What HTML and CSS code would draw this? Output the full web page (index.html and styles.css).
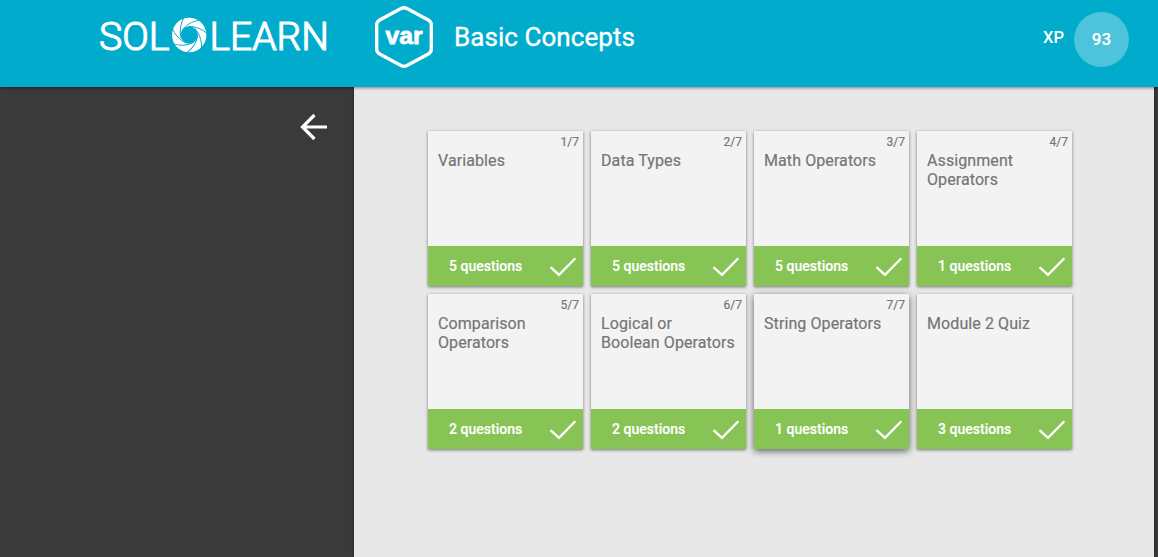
FILE: index.html
```html
<!DOCTYPE html>
<html lang="en">
<head>
<meta charset="utf-8">
<title>Basic Concepts</title>
<link rel="stylesheet" href="styles.css">
</head>
<body>
<svg class="defs" aria-hidden="true">
  <symbol id="check" viewBox="0 0 28 22"><path d="M1.500 12.200l8.500 7.600L26.300 3.300" fill="none" stroke="#fff" stroke-width="2.300"/></symbol>
</svg>
<header class="topbar">
  <svg class="logo" viewBox="0 0 232 48" role="img">
    <text x="1" y="36.500" textLength="70.500" lengthAdjust="spacingAndGlyphs">SOL</text>
    <text x="111.500" y="36.500" textLength="119.500" lengthAdjust="spacingAndGlyphs">LEARN</text>
    <g transform="translate(91.200 22)">
      <circle class="ring" r="12.700"/>
      <g class="cuts">
        <path id="cut" d="M-8.200 3C-9.500-5-2-12.500 10-15"/>
        <use href="#cut" transform="rotate(51.430)"/><use href="#cut" transform="rotate(102.860)"/>
        <use href="#cut" transform="rotate(154.290)"/><use href="#cut" transform="rotate(205.710)"/>
        <use href="#cut" transform="rotate(257.140)"/><use href="#cut" transform="rotate(308.570)"/>
      </g>
    </g>
  </svg>
  <svg class="module-icon" viewBox="0 0 60 64">
    <path d="M27 3.500Q30 1.900 33 3.500L54.300 15Q57.300 16.700 57.300 19.800V44.200Q57.300 47.300 54.300 49L33 60.500Q30 62.100 27 60.500L5.700 49Q2.700 47.300 2.700 44.200V19.800Q2.700 16.700 5.700 15Z"/>
    <text x="11.500" y="38.700" textLength="37" lengthAdjust="spacingAndGlyphs">var</text>
  </svg>
  <h1 class="title">Basic Concepts</h1>
  <span class="xp-label">XP</span>
  <span class="xp">93</span>
</header>
<div class="body">
  <aside class="side">
    <svg class="back" viewBox="0 0 28 28"><path d="M27 14H3M14.500 2L2.500 14L14.500 26"/></svg>
  </aside>
  <main class="content">
    <div class="grid">
      <article class="card"><span class="num">1/7</span><h2>Variables</h2><footer><span>5 questions</span><svg><use href="#check"/></svg></footer></article>
      <article class="card"><span class="num">2/7</span><h2>Data Types</h2><footer><span>5 questions</span><svg><use href="#check"/></svg></footer></article>
      <article class="card"><span class="num">3/7</span><h2>Math Operators</h2><footer><span>5 questions</span><svg><use href="#check"/></svg></footer></article>
      <article class="card"><span class="num">4/7</span><h2>Assignment Operators</h2><footer><span>1 questions</span><svg><use href="#check"/></svg></footer></article>
      <article class="card"><span class="num">5/7</span><h2>Comparison Operators</h2><footer><span>2 questions</span><svg><use href="#check"/></svg></footer></article>
      <article class="card"><span class="num">6/7</span><h2>Logical or<br>Boolean Operators</h2><footer><span>2 questions</span><svg><use href="#check"/></svg></footer></article>
      <article class="card raised"><span class="num">7/7</span><h2>String Operators</h2><footer><span>1 questions</span><svg><use href="#check"/></svg></footer></article>
      <article class="card"><span class="num"></span><h2>Module 2 Quiz</h2><footer><span>3 questions</span><svg><use href="#check"/></svg></footer></article>
    </div>
  </main>
</div>
</body>
</html>
```
FILE: styles.css
```css
* { box-sizing: border-box; }
body {
  margin: 0;
  height: 557px;
  display: flex;
  flex-direction: column;
  overflow: hidden;
  font-family: Roboto, sans-serif;
  background: #3a3a3a;
}
.defs { position: absolute; width: 0; height: 0; }
.topbar {
  height: 87px;
  flex: none;
  display: flex;
  align-items: flex-start;
  padding: 0 29px 0 98px;
  background: #00abcc;
  color: #fff;
  box-shadow: 0 1px 3px rgba(0, 0, 0, .45);
  z-index: 1;
}
.logo { width: 232px; height: 48px; margin-top: 13px; overflow: visible; fill: #fff; font-size: 39px; font-weight: 300; }
.logo text { stroke: #fff; stroke-width: 1.200; }
.ring { fill: none; stroke: #fff; stroke-width: 9; }
.cuts { fill: none; stroke: #00abcc; stroke-width: .9; }
.module-icon { width: 60px; height: 64px; margin: 5px 0 0 44px; }
.module-icon path { fill: none; stroke: #fff; stroke-width: 3.400; }
.module-icon text { fill: #fff; stroke: #fff; stroke-width: .8; stroke-linejoin: round; font: 700 23px "Liberation Sans", sans-serif; }
.title { margin: 21px auto 0 20px; font-size: 26px; line-height: 32px; font-weight: 400; letter-spacing: .06px; -webkit-text-stroke: .35px; }
.xp-label { margin: 28px 10px 0 0; font-size: 16.500px; line-height: 20px; font-weight: 500; }
.xp {
  width: 55px;
  height: 55px;
  margin-top: 12px;
  border-radius: 50%;
  background: #4dc4db;
  text-align: center;
  font-size: 17px;
  line-height: 55px;
  font-weight: 500;
  -webkit-text-stroke: .15px;
}
.body { flex: 1; display: flex; padding-right: 4px; }
.side { width: 354px; padding: 26px 26px 0 0; text-align: right; }
.back { width: 28px; height: 28px; fill: none; stroke: #fff; stroke-width: 3.200; }
.content { flex: 1; padding: 44px 0 0 74px; background: #e8e8e8; box-shadow: 0 0 3px rgba(0, 0, 0, .5); }
.grid { display: grid; grid-template-columns: repeat(4, 155px); grid-auto-rows: 155px; gap: 8px; }
.card {
  display: flex;
  flex-direction: column;
  background: #f3f3f3;
  color: #757575;
  box-shadow: 0 1px 3px rgba(0, 0, 0, .5);
}
.raised { box-shadow: 0 2px 7px rgba(0, 0, 0, .6); }
.num { height: 19px; padding: 3px 4px 0 0; text-align: right; font-size: 12px; line-height: 16px; -webkit-text-stroke: .2px; }
.card h2 { margin: 0; padding: 1px 6px 0 10px; font-size: 16px; line-height: 19px; font-weight: 400; letter-spacing: .09px; -webkit-text-stroke: .18px; }
.card footer {
  height: 40px;
  margin-top: auto;
  padding: 0 6px 0 21px;
  display: flex;
  align-items: center;
  justify-content: space-between;
  background: #88c455;
  color: #fff;
  font-size: 14px;
  font-weight: 500;
  letter-spacing: .03px;
  -webkit-text-stroke: .15px;
}
.card footer svg { width: 28px; height: 22px; }
```
